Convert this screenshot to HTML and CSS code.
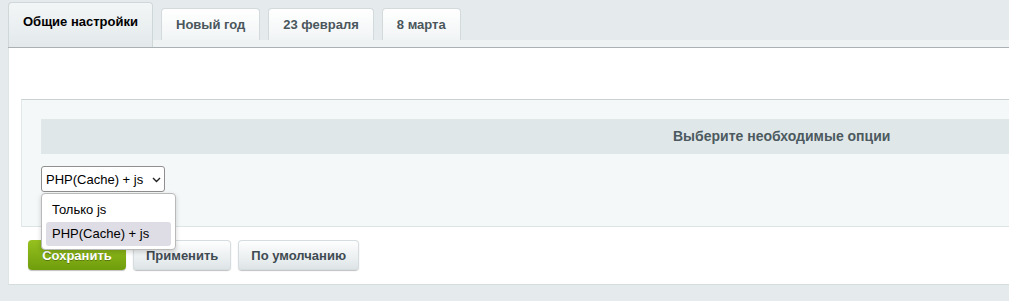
FILE: index.html
```html
<!DOCTYPE html>
<html lang="ru">
<head>
    <meta charset="UTF-8">
    <meta name="viewport" content="width=device-width, initial-scale=1.0">
    <title>Настройки модуля</title>
    <link rel="stylesheet" href="styles.css">
</head>
<body>
    <div class="page">
        <div class="tabs">
            <div class="tab active">Общие настройки</div>
            <div class="tab">Новый год</div>
            <div class="tab">23 февраля</div>
            <div class="tab">8 марта</div>
        </div>
        <div class="tabs-line"></div>

        <div class="panel">
            <div class="options">
                <div class="options-head">Выберите необходимые опции</div>
                <div class="select-wrap">
                    <div class="select">
                        <span>PHP(Cache) + js</span>
                        <svg class="chevron" width="9" height="6" viewBox="0 0 9 6">
                            <path d="M1 1 L4.5 4.5 L8 1" fill="none" stroke="#222" stroke-width="1.4"/>
                        </svg>
                    </div>
                    <div class="dropdown">
                        <div class="option">Только js</div>
                        <div class="option selected">PHP(Cache) + js</div>
                    </div>
                </div>
            </div>

            <div class="buttons">
                <button class="btn btn-save">Сохранить</button>
                <button class="btn">Применить</button>
                <button class="btn">По умолчанию</button>
            </div>
        </div>
    </div>
</body>
</html>
```

FILE: styles.css
```css
html, body {
    margin: 0;
    overflow: hidden;
}

body {
    background-color: #e5eaec;
    font-family: "Liberation Sans", Arial, sans-serif;
    font-size: 13px;
}

.page {
    width: 1600px;
    padding: 2px 0 0 8px;
}

/* tabs */
.tabs {
    display: flex;
    align-items: flex-end;
    gap: 8px;
    height: 38px;
}

.tab {
    height: 32px;
    line-height: 32px;
    padding: 0 14px;
    box-sizing: border-box;
    border: 1px solid #d3dadc;
    border-bottom: none;
    border-radius: 4px 4px 0 0;
    background: linear-gradient(#ffffff, #f1f4f5);
    color: #4a565c;
    font-weight: bold;
}

.tab.active {
    height: 45px;
    line-height: 38px;
    margin-bottom: -7px;
    position: relative;
    z-index: 1;
    background: linear-gradient(#f3f6f7, #e3e9eb);
    border-color: #d0d7d9;
    color: #000;
}

.tabs-line {
    height: 7px;
    background-color: #eef2f3;
    border-bottom: 1px solid #a9b1b4;
}

/* content panel */
.panel {
    background-color: #fff;
    padding: 51px 0 14px 12px;
    border-left: 1px solid #dfe5e7;
    border-bottom: 1px solid #d5dcde;
}

.options {
    background-color: #f5f8f9;
    border-top: 1px solid #c9d0d2;
    border-left: 1px solid #e3e9eb;
    border-bottom: 1px solid #dde4e6;
    padding: 19px 0 34px 19px;
}

.options-head {
    height: 35px;
    line-height: 35px;
    background-color: #e0e7e9;
    color: #4c5a60;
    font-size: 14px;
    font-weight: bold;
    padding-left: 632px;
}

/* select */
.select-wrap {
    position: relative;
    display: inline-block;
    margin-top: 12px;
    vertical-align: top;
}

.select {
    display: flex;
    align-items: center;
    gap: 9px;
    height: 26px;
    box-sizing: border-box;
    padding: 0 3px 0 4px;
    border: 1px solid #8f8f8f;
    border-radius: 3px;
    background-color: #fff;
    color: #000;
    font-size: 13px;
}

.chevron {
    margin-top: 1px;
}

.dropdown {
    position: absolute;
    top: 27px;
    left: 0;
    width: 135px;
    box-sizing: border-box;
    padding: 3px 4px 3px 4px;
    background-color: #fff;
    border: 1px solid #b9b9b9;
    border-radius: 4px;
    box-shadow: 0 2px 5px rgba(0, 0, 0, 0.18);
    z-index: 5;
}

.option {
    height: 25px;
    line-height: 25px;
    padding-left: 6px;
    color: #000;
    font-size: 13px;
    border-radius: 3px;
}

.option.selected {
    background-color: #dedce4;
    height: 24px;
    line-height: 24px;
}

/* buttons */
.buttons {
    display: flex;
    gap: 7px;
    padding: 13px 0 0 7px;
}

.btn {
    height: 30px;
    padding: 0 13px;
    border: none;
    border-radius: 4px;
    background: linear-gradient(#ffffff, #dde4e6);
    box-shadow: 0 1px 1px rgba(0, 0, 0, 0.25), inset 0 0 0 1px #d6dde0;
    color: #3f4b52;
    font-family: "Liberation Sans", Arial, sans-serif;
    font-size: 13px;
    font-weight: bold;
}

.btn-save {
    width: 98px;
    background: linear-gradient(#96c11f, #6f9d0c);
    box-shadow: 0 1px 1px rgba(0, 0, 0, 0.25);
    color: #fff;
    text-shadow: 0 1px 0 rgba(0, 0, 0, 0.3);
}
```
